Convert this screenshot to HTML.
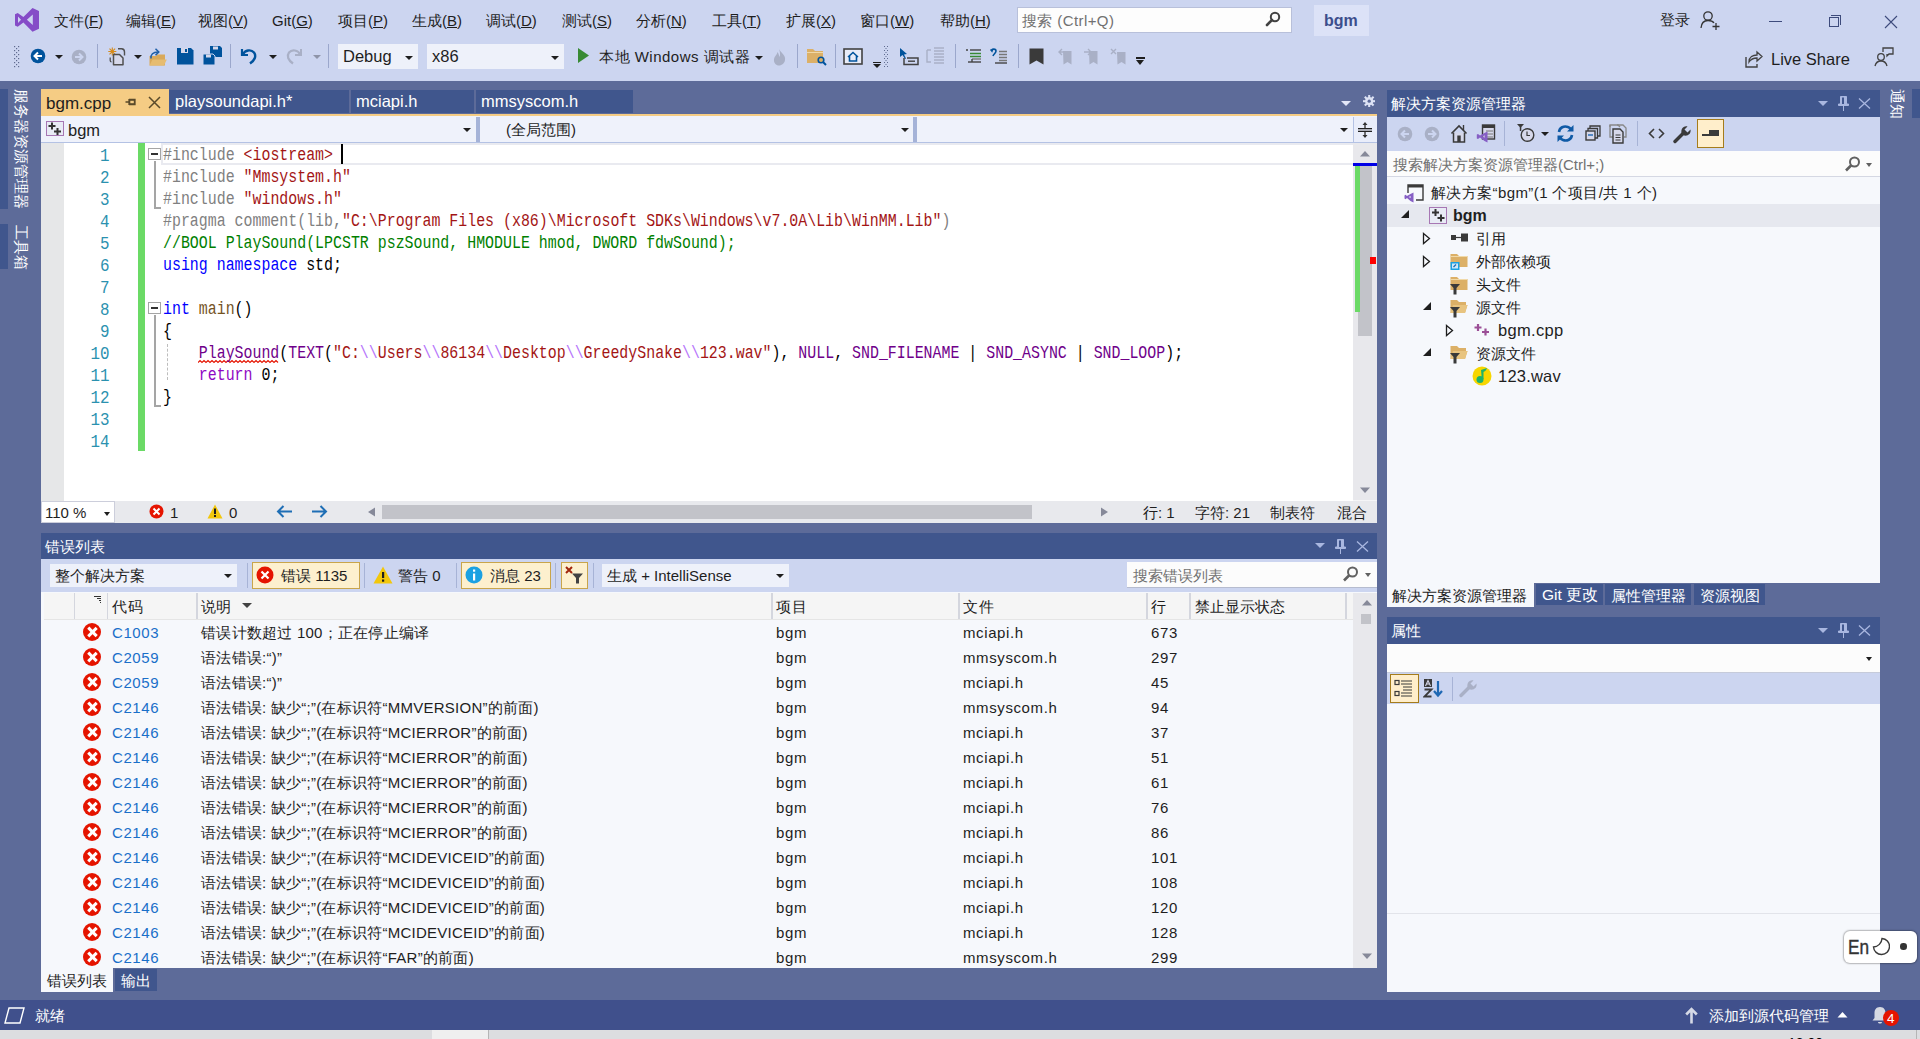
<!DOCTYPE html>
<html><head><meta charset="utf-8">
<style>
*{margin:0;padding:0;box-sizing:border-box}
html,body{width:1920px;height:1039px;overflow:hidden}
body{position:relative;background:#CCD5F0;font-family:"Liberation Sans",sans-serif;font-size:15px;color:#1E1E1E}
.a{position:absolute}
.t{position:absolute;white-space:nowrap;line-height:1}
.env{position:absolute;left:0;top:81px;width:1920px;height:919px;background:#5D6B99}
.menu .t{top:13px;font-size:15px;color:#1E1E1E}
.sep{position:absolute;width:1px;background:#9BA7CC}
.combo{position:absolute;background:#EEF1FA}
.arr{position:absolute;width:0;height:0;border-left:4px solid transparent;border-right:4px solid transparent;border-top:4px solid #1E1E1E}
.dtab{position:absolute;top:90px;height:23px;background:#40568D;color:#fff;font-size:15px}
.code{position:absolute;left:162.5px;font-family:"Liberation Mono",monospace;font-size:18.333px;transform-origin:0 0;transform:scaleX(0.8135);padding-top:2px;white-space:pre;line-height:22px;color:#000}
.ln{position:absolute;left:64px;width:45.5px;text-align:right;transform-origin:100% 0;transform:scaleX(0.88);font-family:"Liberation Mono",monospace;font-size:18px;padding-top:2px;line-height:22px;color:#2B91AF}
.pp{color:#808080}.str{color:#A31515}.cm{color:#008000}.kw{color:#0000FF}.fn{color:#74531F}.mac{color:#6F008A}.esc{color:#B776FB}.ctl{color:#8F08C4}
.twtitle{position:absolute;height:26px;background:#40568D;color:#fff}
.row{position:absolute;left:41px;width:1312px;height:25px}
.row .t{top:5px;font-size:15px}
.ico-err{position:absolute;width:18px;height:18px;border-radius:50%;background:#E51400}
.ico-err:before,.ico-err:after{content:"";position:absolute;left:7.6px;top:3px;width:2.8px;height:12px;background:#fff;transform:rotate(45deg)}
.ico-err:after{transform:rotate(-45deg)}
.tree .t{font-size:15px}
</style></head><body>

<!-- ===== title bar ===== -->
<div class="menu">
<!-- logo -->
<svg class="a" style="left:10px;top:4px" width="34" height="32" viewBox="0 0 34 32"><path d="M22.5 3.9 L29 7 L29 24.7 L22.5 27.7 L13.4 18.6 L7.7 22.7 L5 21.4 L5 10.2 L7.7 8.9 L13.4 13.1 Z M22.8 10.6 L16.9 15.8 L22.8 21.1 Z M8 12.5 L11 15.8 L8 19.1 Z" fill="#854CC7" fill-rule="evenodd"/></svg>
<div class="t" style="left:54px">文件(<u>F</u>)</div>
<div class="t" style="left:126px">编辑(<u>E</u>)</div>
<div class="t" style="left:198px">视图(<u>V</u>)</div>
<div class="t" style="left:272px">Git(<u>G</u>)</div>
<div class="t" style="left:338px">项目(<u>P</u>)</div>
<div class="t" style="left:412px">生成(<u>B</u>)</div>
<div class="t" style="left:486px">调试(<u>D</u>)</div>
<div class="t" style="left:562px">测试(<u>S</u>)</div>
<div class="t" style="left:636px">分析(<u>N</u>)</div>
<div class="t" style="left:712px">工具(<u>T</u>)</div>
<div class="t" style="left:786px">扩展(<u>X</u>)</div>
<div class="t" style="left:860px">窗口(<u>W</u>)</div>
<div class="t" style="left:940px">帮助(<u>H</u>)</div>
<!-- search -->
<div class="a" style="left:1017px;top:7px;width:275px;height:26px;background:#FDFDFD;border:1px solid #B8C0DA"></div>
<div class="t" style="left:1022px;top:13px;color:#717171;letter-spacing:0.4px">搜索 (Ctrl+Q)</div>
<svg class="a" style="left:1265px;top:11px" width="16" height="16" viewBox="0 0 16 16"><circle cx="10" cy="6" r="4.2" fill="none" stroke="#424242" stroke-width="2"/><path d="M7 9 L2 14" stroke="#424242" stroke-width="2.6" stroke-linecap="round"/></svg>
<div class="a" style="left:1314px;top:5px;width:55px;height:31px;background:#DCE2F7"></div>
<div class="t" style="left:1324px;top:13px;font-weight:bold;font-size:16px;color:#3C4E8C">bgm</div>
<div class="t" style="left:1660px;top:12px">登录</div>
<svg class="a" style="left:1700px;top:10px" width="22" height="20" viewBox="0 0 22 20"><circle cx="8" cy="6" r="4.2" fill="none" stroke="#333" stroke-width="1.3"/><path d="M1 18 C1.5 12 4 10.5 8 10.5 C11 10.5 13 11.5 14 13" fill="none" stroke="#333" stroke-width="1.3"/><path d="M16 13 V20 M12.5 16.5 H19.5" stroke="#333" stroke-width="1.3"/></svg>
<div class="a" style="left:1769px;top:21px;width:13px;height:1px;background:#3D4B7C"></div>
<div class="a" style="left:1829px;top:17px;width:10px;height:10px;border:1px solid #3D4B7C"></div>
<div class="a" style="left:1831px;top:15px;width:10px;height:10px;border-top:1px solid #3D4B7C;border-right:1px solid #3D4B7C"></div>
<svg class="a" style="left:1884px;top:15px" width="14" height="14" viewBox="0 0 14 14"><path d="M1 1 L13 13 M13 1 L1 13" stroke="#3D4B7C" stroke-width="1.1"/></svg>
</div>


<!-- ===== toolbar ===== -->
<svg class="a" style="left:13px;top:45px" width="8" height="23" viewBox="0 0 8 23"><g fill="#5F6B8F">
<rect x="1" y="1" width="1.2" height="1.2"/><rect x="5" y="1" width="1.2" height="1.2"/><rect x="3" y="3" width="1.2" height="1.2"/><rect x="1" y="5" width="1.2" height="1.2"/><rect x="5" y="5" width="1.2" height="1.2"/><rect x="3" y="7" width="1.2" height="1.2"/><rect x="1" y="9" width="1.2" height="1.2"/><rect x="5" y="9" width="1.2" height="1.2"/><rect x="3" y="11" width="1.2" height="1.2"/><rect x="1" y="13" width="1.2" height="1.2"/><rect x="5" y="13" width="1.2" height="1.2"/><rect x="3" y="15" width="1.2" height="1.2"/><rect x="1" y="17" width="1.2" height="1.2"/><rect x="5" y="17" width="1.2" height="1.2"/><rect x="3" y="19" width="1.2" height="1.2"/><rect x="1" y="21" width="1.2" height="1.2"/><rect x="5" y="21" width="1.2" height="1.2"/></g></svg>
<svg class="a" style="left:30px;top:48px" width="16" height="16" viewBox="0 0 16 16"><circle cx="8" cy="8" r="7.3" fill="#00539C"/><path d="M12 8 H5 M8 4.5 L4.5 8 L8 11.5" fill="none" stroke="#fff" stroke-width="2"/></svg>
<div class="arr" style="left:55px;top:55px"></div>
<svg class="a" style="left:71px;top:49px" width="16" height="16" viewBox="0 0 16 16"><circle cx="8" cy="8" r="7.3" fill="#A9B0C6"/><path d="M4 8 H11 M8 4.5 L11.5 8 L8 11.5" fill="none" stroke="#CCD5F0" stroke-width="2"/></svg>
<div class="sep" style="left:97px;top:44px;height:24px"></div>
<svg class="a" style="left:107px;top:46px" width="20" height="20" viewBox="0 0 20 20"><path d="M5.3 1.5 V9.5 M1.3 5.5 H9.3 M2.5 2.7 L8.1 8.3 M8.1 2.7 L2.5 8.3" stroke="#D68A1A" stroke-width="1.1"/><path d="M11 2.8 H14.5 Q17.5 3 17.5 6 V9.5" fill="none" stroke="#505050" stroke-width="1.4"/><path d="M3.2 11.5 V14.5 Q3.2 15.8 4.5 15.8" fill="none" stroke="#505050" stroke-width="1.3"/><path d="M6.5 8.5 H12.5 L16 12 V18.8 H6.5 Z" fill="#D6D8EA" stroke="#505050" stroke-width="1.5" stroke-linejoin="round"/></svg>
<div class="arr" style="left:134px;top:55px"></div>
<svg class="a" style="left:148px;top:47px" width="20" height="19" viewBox="0 0 20 19"><path d="M1.5 9 H8 L9 7.5 H17 V18.5 H1.5 Z" fill="#D9A95A"/><path d="M1.5 18.5 L4.5 12.5 H18.8 L16 18.5 Z" fill="#E6BC70"/><path d="M3 11.5 C2.5 7.5 5 5 10 5" fill="none" stroke="#1E5FA8" stroke-width="1.5"/><path d="M7.5 1.8 L10.8 5 L7.5 8.2" fill="none" stroke="#1E5FA8" stroke-width="1.5"/></svg>
<svg class="a" style="left:177px;top:48px" width="17" height="17" viewBox="0 0 17 17"><path d="M0 0 H14 L16.5 2.5 V16.5 H0 Z" fill="#00539C"/><rect x="4" y="0" width="7" height="5" fill="#D6D8EA"/><rect x="8" y="1" width="2" height="3" fill="#00539C"/></svg>
<svg class="a" style="left:202px;top:46px" width="20" height="20" viewBox="0 0 20 20"><path d="M8 0 H18 L20 2 V11 H8 Z" fill="#00539C"/><rect x="11" y="0.5" width="5" height="3" fill="#D6D8EA"/><path d="M1 8 H11 L13 10 V19 H1 Z" fill="#00539C" stroke="#CCD5F0" stroke-width="1"/><rect x="4" y="8.5" width="5" height="3" fill="#D6D8EA"/></svg>
<div class="sep" style="left:230px;top:44px;height:24px"></div>
<svg class="a" style="left:240px;top:47px" width="18" height="18" viewBox="0 0 18 18"><path d="M2 2 V8 H8" fill="none" stroke="#00539C" stroke-width="2.2"/><path d="M2.8 7.5 C5 3 11 2 14 5.5 C16.5 9 15 13 10 16.5" fill="none" stroke="#00539C" stroke-width="2.4"/></svg>
<div class="arr" style="left:269px;top:55px"></div>
<svg class="a" style="left:285px;top:47px" width="18" height="18" viewBox="0 0 18 18"><path d="M16 2 V8 H10" fill="none" stroke="#A9B0C6" stroke-width="2"/><path d="M15.2 7.5 C13 3 7 2 4 5.5 C1.5 9 3 13 8 16.5" fill="none" stroke="#A9B0C6" stroke-width="2.2"/></svg>
<div class="arr" style="left:313px;top:55px;border-top-color:#8E94A8"></div>
<div class="sep" style="left:328px;top:44px;height:24px"></div>
<div class="combo" style="left:338px;top:44px;width:80px;height:25px"></div>
<div class="t" style="left:343px;top:48px;font-size:16.5px">Debug</div>
<div class="arr" style="left:405px;top:56px"></div>
<div class="combo" style="left:427px;top:44px;width:137px;height:25px"></div>
<div class="t" style="left:432px;top:48px;font-size:16.5px">x86</div>
<div class="arr" style="left:551px;top:56px"></div>
<svg class="a" style="left:577px;top:47px" width="13" height="17" viewBox="0 0 13 17"><path d="M1 1 L12 8.5 L1 16 Z" fill="#388A34"/></svg>
<div class="t" style="left:599px;top:49px;letter-spacing:0.5px">本地 Windows 调试器</div>
<div class="arr" style="left:755px;top:56px"></div>
<svg class="a" style="left:772px;top:48px" width="15" height="18" viewBox="0 0 15 18"><path d="M7 1 C9 5 14 7 13 12 C12.5 16 9 17.5 7 17.5 C4 17.5 1.5 15 2 11 C2.5 8 5 7 5.5 4 C7 6 7 8 7.5 9 C8.5 7 8 4 7 1Z" fill="#A9B0C6"/></svg>
<div class="sep" style="left:797px;top:44px;height:24px"></div>
<svg class="a" style="left:806px;top:48px" width="22" height="18" viewBox="0 0 22 18"><path d="M1 1 H7 L9 3 H17 V15 H1 Z" fill="#DCB067"/><rect x="1" y="4" width="16" height="1" fill="#F0D9A8"/><circle cx="15" cy="12" r="2.8" fill="none" stroke="#00539C" stroke-width="1.6"/><path d="M17 14 L20 17" stroke="#00539C" stroke-width="2"/></svg>
<div class="sep" style="left:835px;top:44px;height:24px"></div>
<svg class="a" style="left:843px;top:48px" width="20" height="17" viewBox="0 0 20 17"><rect x="1" y="1" width="18" height="15" fill="#E8ECF8" stroke="#424242" stroke-width="1.6"/><path d="M5 9 L10 4.5 L15 9 M6.5 8 V13 H13.5 V8" fill="none" stroke="#00539C" stroke-width="1.6"/></svg>
<div class="a" style="left:873px;top:62px;width:8px;height:1px;background:#1E1E1E"></div>
<div class="arr" style="left:873px;top:64px"></div>
<svg class="a" style="left:884px;top:45px" width="5" height="23" viewBox="0 0 5 23"><g fill="#5F6B8F"><rect x="0" y="1" width="1" height="1"/><rect x="3" y="1" width="1" height="1"/><rect x="1.5" y="3" width="1" height="1"/><rect x="0" y="5" width="1" height="1"/><rect x="3" y="5" width="1" height="1"/><rect x="1.5" y="7" width="1" height="1"/><rect x="0" y="9" width="1" height="1"/><rect x="3" y="9" width="1" height="1"/><rect x="1.5" y="11" width="1" height="1"/><rect x="0" y="13" width="1" height="1"/><rect x="3" y="13" width="1" height="1"/><rect x="1.5" y="15" width="1" height="1"/><rect x="0" y="17" width="1" height="1"/><rect x="3" y="17" width="1" height="1"/><rect x="1.5" y="19" width="1" height="1"/><rect x="0" y="21" width="1" height="1"/><rect x="3" y="21" width="1" height="1"/></g></svg>
<svg class="a" style="left:899px;top:47px" width="20" height="19" viewBox="0 0 20 19"><path d="M1 1 L1 10 L3.5 8 L6 12 L7 11.5 L5 7.5 L8 7 Z" fill="#00539C"/><path d="M5 11 V17.5 H19 V11 H8" fill="none" stroke="#424242" stroke-width="1.5"/><rect x="9" y="13.5" width="7" height="1.4" fill="#424242"/></svg>
<svg class="a" style="left:926px;top:47px" width="20" height="19" viewBox="0 0 20 19"><g fill="none" stroke="#A9B0C6" stroke-width="1.4"><path d="M1 3 V15 H5 M1 3 H5"/><path d="M8 1 H18 M8 4 H18 M8 7 H18 M8 10 H18 M8 13 H18 M8 16 H18"/></g></svg>
<div class="sep" style="left:955px;top:44px;height:24px"></div>
<svg class="a" style="left:965px;top:49px" width="17" height="14" viewBox="0 0 17 14"><g fill="none" stroke-width="1.4"><path d="M1 1 H3" stroke="#424242"/><path d="M5 1 H16" stroke="#424242"/><path d="M5 4.5 H16 M5 7.5 H16" stroke="#388A34"/><path d="M7 10 H16" stroke="#777"/><path d="M3 13 H16" stroke="#424242"/><path d="M7 10 V13" stroke="#424242"/></g></svg>
<svg class="a" style="left:990px;top:48px" width="18" height="16" viewBox="0 0 18 16"><path d="M1.5 3 C1.5 0.5 6 0.5 6 3 C6 5 3.5 6 3 8" fill="none" stroke="#00539C" stroke-width="1.6"/><path d="M0.5 1.5 L2 3.5 L3 1" fill="none" stroke="#00539C" stroke-width="1.2"/><g stroke="#777" stroke-width="1.4"><path d="M9 3.5 H17 M9 6.5 H17 M9 9.5 H17 M9 12.5 H17"/></g><path d="M5 15 H17" stroke="#424242" stroke-width="1.4"/></svg>
<div class="sep" style="left:1018px;top:44px;height:24px"></div>
<svg class="a" style="left:1029px;top:48px" width="15" height="17" viewBox="0 0 15 17"><path d="M0.5 0.5 H14.5 V16.5 L7.5 12.5 L0.5 16.5 Z" fill="#3A3A3A"/></svg>
<svg class="a" style="left:1057px;top:48px" width="16" height="17" viewBox="0 0 16 17"><path d="M6 3 H14.5 V16.5 L10.5 14 L6.5 16.5 Z" fill="#A9B0C6"/><path d="M9 4 H2 M5 1 L2 4 L5 7" fill="none" stroke="#A9B0C6" stroke-width="1.4"/></svg>
<svg class="a" style="left:1083px;top:48px" width="16" height="17" viewBox="0 0 16 17"><path d="M6 3 H14.5 V16.5 L10.5 14 L6.5 16.5 Z" fill="#A9B0C6"/><path d="M1 4 H8 M5 1 L8 4 L5 7" fill="none" stroke="#A9B0C6" stroke-width="1.4"/></svg>
<svg class="a" style="left:1110px;top:48px" width="17" height="17" viewBox="0 0 17 17"><path d="M7 4 H15.5 V16.5 L11.5 14 L7.5 16.5 Z" fill="#A9B0C6"/><path d="M1 1 L6 6 M6 1 L1 6" fill="none" stroke="#A9B0C6" stroke-width="1.4"/></svg>
<div class="a" style="left:1136px;top:57px;width:9px;height:1.5px;background:#1E1E1E"></div>
<div class="arr" style="left:1136px;top:60px;border-left-width:4.5px;border-right-width:4.5px;border-top-width:5px"></div>
<svg class="a" style="left:1745px;top:49px" width="18" height="19" viewBox="0 0 18 19"><path d="M1 8 V18 H12 V15" fill="none" stroke="#424242" stroke-width="1.4"/><path d="M4 13 C4 8 8 6 12 6 V3 L17 7.5 L12 12 V9 C9 9 6 10 4 13Z" fill="none" stroke="#424242" stroke-width="1.3"/></svg>
<div class="t" style="left:1771px;top:51px;font-size:16.5px">Live Share</div>
<svg class="a" style="left:1874px;top:47px" width="20" height="20" viewBox="0 0 20 20"><circle cx="7" cy="10" r="3.3" fill="none" stroke="#424242" stroke-width="1.3"/><path d="M1 19 C2 15 4 14 7 14 C10 14 12 15 13 19" fill="none" stroke="#424242" stroke-width="1.3"/><path d="M9 5 V1 H19 V7 H15 L13 9 V7" fill="none" stroke="#424242" stroke-width="1.3"/></svg>

<!-- ===== env ===== -->
<div class="env"></div>

<!-- ===== left strip ===== -->
<div class="a" style="left:0;top:89px;width:8px;height:120px;background:#40568D"></div>
<div class="a" style="left:0;top:224px;width:8px;height:45px;background:#40568D"></div>
<div class="t" style="left:29px;top:89px;transform-origin:0 0;transform:rotate(90deg);font-size:15px;color:#fff">服务器资源管理器</div>
<div class="t" style="left:29px;top:225px;transform-origin:0 0;transform:rotate(90deg);font-size:15px;color:#fff">工具箱</div>

<!-- ===== document tabs ===== -->
<div class="a" style="left:41px;top:89px;width:128px;height:27px;background:#F5CC84"></div>
<div class="t" style="left:46px;top:95px;font-size:17px;color:#1E1E1E">bgm.cpp</div>
<svg class="a" style="left:125px;top:96px" width="12" height="12" viewBox="0 0 12 12"><path d="M0.5 6 H4 M4 3 V9 M4 3.5 H10 V8.5 H4" fill="none" stroke="#5A4A2A" stroke-width="1.3"/><rect x="4" y="3.5" width="6" height="5" fill="#5A4A2A"/><rect x="5.3" y="4.8" width="3.5" height="2.4" fill="#F5CC84"/></svg>
<svg class="a" style="left:148px;top:96px" width="13" height="13" viewBox="0 0 13 13"><path d="M1 1 L12 12 M12 1 L1 12" stroke="#5A4A2A" stroke-width="1.5"/></svg>
<div class="a" style="left:169px;top:114px;width:1208px;height:2px;background:#F5CC84"></div>
<div class="dtab" style="left:169px;width:180px"><div class="t" style="left:6px;top:3px;font-size:16.5px">playsoundapi.h*</div></div>
<div class="dtab" style="left:351px;width:123px"><div class="t" style="left:5px;top:3px;font-size:16.5px">mciapi.h</div></div>
<div class="dtab" style="left:476px;width:157px"><div class="t" style="left:5px;top:3px;font-size:16.5px">mmsyscom.h</div></div>
<div class="arr" style="left:1341px;top:101px;border-top-color:#E3E7F8;border-left-width:5px;border-right-width:5px;border-top-width:5px"></div>
<svg class="a" style="left:1362.8px;top:95px" width="12.4" height="12.4" viewBox="0 0 14.4 14.4"><g fill="#DDE2F4"><circle cx="7.2" cy="7.2" r="4.8"/><rect x="6" y="0" width="2.4" height="3.5" transform="rotate(0 7.2 7.2)"/><rect x="6" y="0" width="2.4" height="3.5" transform="rotate(45 7.2 7.2)"/><rect x="6" y="0" width="2.4" height="3.5" transform="rotate(90 7.2 7.2)"/><rect x="6" y="0" width="2.4" height="3.5" transform="rotate(135 7.2 7.2)"/><rect x="6" y="0" width="2.4" height="3.5" transform="rotate(180 7.2 7.2)"/><rect x="6" y="0" width="2.4" height="3.5" transform="rotate(225 7.2 7.2)"/><rect x="6" y="0" width="2.4" height="3.5" transform="rotate(270 7.2 7.2)"/><rect x="6" y="0" width="2.4" height="3.5" transform="rotate(315 7.2 7.2)"/></g><circle cx="7.2" cy="7.2" r="1.9" fill="#5D6B99"/></svg>

<!-- ===== nav bar ===== -->
<div class="a" style="left:41px;top:116px;width:1336px;height:27px;background:#EFF2FB;border-bottom:1px solid #B4C2E4"></div>
<div class="a" style="left:46px;top:121px;width:18px;height:15px;border:1px solid #A777B4;background:#E8EBF5"></div>
<svg class="a" style="left:48px;top:122px" width="14" height="14" viewBox="0 0 14 14"><path d="M4 0.5 V7.5 M0.5 4 H7.5 M9.5 6 V13 M6 9.5 H13" stroke="#333" stroke-width="2"/></svg>
<div class="t" style="left:68px;top:122px;font-size:16.5px">bgm</div>
<div class="arr" style="left:463px;top:128px"></div>
<div class="a" style="left:476px;top:117px;width:4px;height:25px;background:#A5B3D8"></div>
<div class="t" style="left:506px;top:122px;font-size:15px">(全局范围)</div>
<div class="arr" style="left:901px;top:128px"></div>
<div class="a" style="left:913px;top:117px;width:4px;height:25px;background:#A5B3D8"></div>
<div class="arr" style="left:1340px;top:128px"></div>
<div class="a" style="left:1353px;top:117px;width:1px;height:25px;background:#B4C2E4"></div>
<div class="a" style="left:1354px;top:117px;width:23px;height:25px;background:#E9EDFA"></div><svg class="a" style="left:1357px;top:121px" width="16" height="18" viewBox="0 0 16 18"><rect x="1" y="7.5" width="14" height="3" fill="#A9ABB5"/><path d="M1 7.5 H15 M1 10.5 H15" stroke="#222" stroke-width="1.2"/><path d="M8 2 V7 M8 11 V16" stroke="#444" stroke-width="1.5"/><path d="M5.5 4 L8 1 L10.5 4 Z M5.5 14 L8 17 L10.5 14 Z" fill="#333"/></svg>

<!-- ===== editor ===== -->
<div class="a" style="left:41px;top:143px;width:1312px;height:358px;background:#fff"></div>
<div class="a" style="left:41px;top:143px;width:23px;height:358px;background:#E6E7E8"></div>
<div class="a" style="left:138px;top:143px;width:7px;height:308px;background:#6BDA66"></div>
<div class="a" style="left:1353px;top:143px;width:24px;height:358px;background:#E8E8EC"></div>

<div class="a" style="left:161px;top:143px;width:1192px;height:22px;border:2px solid #E9EAF0;border-right:none"></div>
<div class="a" style="left:341px;top:144px;width:2px;height:20px;background:#000"></div>
<div class="a" style="left:148px;top:148px;width:13px;height:12px;border:1px solid #A5A5A5;background:#fff"></div>
<div class="a" style="left:151px;top:153px;width:7px;height:2px;background:#333"></div>
<div class="a" style="left:154px;top:161px;width:1.5px;height:47px;background:#A5A5A5"></div>
<div class="a" style="left:154px;top:207px;width:7px;height:1.5px;background:#A5A5A5"></div>
<div class="a" style="left:148px;top:302px;width:13px;height:12px;border:1px solid #A5A5A5;background:#fff"></div>
<div class="a" style="left:151px;top:307px;width:7px;height:2px;background:#333"></div>
<div class="a" style="left:154px;top:315px;width:1.5px;height:91px;background:#A5A5A5"></div>
<div class="a" style="left:154px;top:405px;width:7px;height:1.5px;background:#A5A5A5"></div>
<div class="a" style="left:167px;top:344px;width:1px;height:36px;border-left:1px dashed #BDBDBD"></div>
<svg class="a" style="left:198px;top:359px" width="81" height="5" viewBox="0 0 81 5"><path d="M0 3.5 L2 1.5 L4 3.5 L6 1.5 L8 3.5 L10 1.5 L12 3.5 L14 1.5 L16 3.5 L18 1.5 L20 3.5 L22 1.5 L24 3.5 L26 1.5 L28 3.5 L30 1.5 L32 3.5 L34 1.5 L36 3.5 L38 1.5 L40 3.5 L42 1.5 L44 3.5 L46 1.5 L48 3.5 L50 1.5 L52 3.5 L54 1.5 L56 3.5 L58 1.5 L60 3.5 L62 1.5 L64 3.5 L66 1.5 L68 3.5 L70 1.5 L72 3.5 L74 1.5 L76 3.5 L78 1.5 L80 3.5" fill="none" stroke="#E51400" stroke-width="1.1"/></svg>
<div class="ln" style="top:143px">1</div>
<div class="code" style="top:143px"><span class="pp">#include</span> <span class="str">&lt;iostream&gt;</span></div>
<div class="ln" style="top:165px">2</div>
<div class="code" style="top:165px"><span class="pp">#include</span> <span class="str">"Mmsystem.h"</span></div>
<div class="ln" style="top:187px">3</div>
<div class="code" style="top:187px"><span class="pp">#include</span> <span class="str">"windows.h"</span></div>
<div class="ln" style="top:209px">4</div>
<div class="code" style="top:209px"><span class="pp">#pragma comment(lib,</span><span class="str">"C:\Program Files (x86)\Microsoft SDKs\Windows\v7.0A\Lib\WinMM.Lib"</span><span class="pp">)</span></div>
<div class="ln" style="top:231px">5</div>
<div class="code" style="top:231px"><span class="cm">//BOOL PlaySound(LPCSTR pszSound, HMODULE hmod, DWORD fdwSound);</span></div>
<div class="ln" style="top:253px">6</div>
<div class="code" style="top:253px"><span class="kw">using</span> <span class="kw">namespace</span> std;</div>
<div class="ln" style="top:275px">7</div>
<div class="code" style="top:275px"></div>
<div class="ln" style="top:297px">8</div>
<div class="code" style="top:297px"><span class="kw">int</span> <span class="fn">main</span>()</div>
<div class="ln" style="top:319px">9</div>
<div class="code" style="top:319px">{</div>
<div class="ln" style="top:341px">10</div>
<div class="code" style="top:341px">    <span class="mac">PlaySound</span>(<span class="mac">TEXT</span>(<span class="str">"C:<span class="esc">\\</span>Users<span class="esc">\\</span>86134<span class="esc">\\</span>Desktop<span class="esc">\\</span>GreedySnake<span class="esc">\\</span>123.wav"</span>), <span class="mac">NULL</span>, <span class="mac">SND_FILENAME</span> | <span class="mac">SND_ASYNC</span> | <span class="mac">SND_LOOP</span>);</div>
<div class="ln" style="top:363px">11</div>
<div class="code" style="top:363px">    <span class="ctl">return</span> 0;</div>
<div class="ln" style="top:385px">12</div>
<div class="code" style="top:385px">}</div>
<div class="ln" style="top:407px">13</div>
<div class="code" style="top:407px"></div>
<div class="ln" style="top:429px">14</div>
<div class="code" style="top:429px"></div>

<!-- ===== editor bottom bar ===== -->
<div class="a" style="left:41px;top:501px;width:1336px;height:22px;background:#E8E9ED"></div>
<div class="a" style="left:41px;top:501px;width:74px;height:22px;background:#fff;border:1px solid #CCCEDB"></div>
<div class="t" style="left:45px;top:505px;font-size:15px">110 %</div>
<div class="arr" style="left:104px;top:512px;border-left-width:3.5px;border-right-width:3.5px"></div>
<svg class="a" style="left:149px;top:504px" width="15" height="15" viewBox="0 0 15 15"><circle cx="7.5" cy="7.5" r="7" fill="#E51400"/><path d="M4.5 4.5 L10.5 10.5 M10.5 4.5 L4.5 10.5" stroke="#fff" stroke-width="2"/></svg>
<div class="t" style="left:170px;top:505px">1</div>
<svg class="a" style="left:207px;top:504px" width="16" height="15" viewBox="0 0 16 15"><path d="M8 0.5 L15.5 14.5 H0.5 Z" fill="#F2C70C"/><rect x="7" y="4.5" width="2" height="5.5" fill="#1E1E1E"/><rect x="7" y="11" width="2" height="2" fill="#1E1E1E"/></svg>
<div class="t" style="left:229px;top:505px">0</div>
<svg class="a" style="left:276px;top:505px" width="17" height="13" viewBox="0 0 17 13"><path d="M16 6.5 H2 M7.5 1 L2 6.5 L7.5 12" fill="none" stroke="#1E6EB5" stroke-width="2"/></svg>
<svg class="a" style="left:311px;top:505px" width="17" height="13" viewBox="0 0 17 13"><path d="M1 6.5 H15 M9.5 1 L15 6.5 L9.5 12" fill="none" stroke="#1E6EB5" stroke-width="2"/></svg>
<svg class="a" style="left:367px;top:507px" width="9" height="10" viewBox="0 0 9 10"><path d="M8 0.5 L1 5 L8 9.5Z" fill="#868999"/></svg>
<div class="a" style="left:382px;top:505px;width:650px;height:14px;background:#C2C3C9"></div>
<svg class="a" style="left:1100px;top:507px" width="9" height="10" viewBox="0 0 9 10"><path d="M1 0.5 L8 5 L1 9.5Z" fill="#868999"/></svg>
<div class="t" style="left:1143px;top:505px">行: 1</div>
<div class="t" style="left:1195px;top:505px">字符: 21</div>
<div class="t" style="left:1270px;top:505px">制表符</div>
<div class="t" style="left:1337px;top:505px">混合</div>

<!-- ===== error list ===== -->
<div class="twtitle" style="left:41px;top:533px;width:1336px"></div>
<div class="t" style="left:45px;top:539px;color:#fff">错误列表</div>
<div class="arr" style="left:1315px;top:543px;border-top-color:#A9B7E0;border-left-width:5px;border-right-width:5px;border-top-width:5px"></div>
<svg class="a" style="left:1335px;top:539px" width="11" height="15" viewBox="0 0 11 15"><path d="M2.5 0.5 H8.5 V8 H10.5 V9.5 H0.5 V8 H2.5 Z M5.5 9.5 V15" fill="#A9B7E0" stroke="#A9B7E0" stroke-width="1"/><rect x="4" y="1.5" width="2" height="6.5" fill="#40568D"/></svg>
<svg class="a" style="left:1356px;top:541px" width="13" height="11" viewBox="0 0 13 11"><path d="M1 0.5 L12 10.5 M12 0.5 L1 10.5" stroke="#A9B7E0" stroke-width="1.3"/></svg>
<div class="a" style="left:41px;top:559px;width:1336px;height:33px;background:#CCD5F0"></div>
<div class="combo" style="left:50px;top:564px;width:187px;height:23px"></div>
<div class="t" style="left:55px;top:568px">整个解决方案</div>
<div class="arr" style="left:224px;top:574px"></div>
<div class="sep" style="left:247px;top:563px;height:25px;background:#A7B3D6"></div>
<div class="a" style="left:252px;top:562px;width:108px;height:27px;background:#FDF0CE;border:1px solid #C9A54B"></div>
<svg class="a" style="left:256px;top:566px" width="18" height="18" viewBox="0 0 18 18"><circle cx="9" cy="9" r="8.5" fill="#E51400"/><path d="M5.5 5.5 L12.5 12.5 M12.5 5.5 L5.5 12.5" stroke="#fff" stroke-width="2.2"/></svg>
<div class="t" style="left:281px;top:568px">错误 1135</div>
<div class="sep" style="left:364px;top:563px;height:25px;background:#A7B3D6"></div>
<svg class="a" style="left:373px;top:566px" width="20" height="18" viewBox="0 0 20 18"><path d="M10 0.5 L19.5 17.5 H0.5 Z" fill="#F2C70C"/><rect x="9" y="6" width="2.2" height="6" fill="#1E1E1E"/><rect x="9" y="13.5" width="2.2" height="2.2" fill="#1E1E1E"/></svg>
<div class="t" style="left:398px;top:568px">警告 0</div>
<div class="sep" style="left:456px;top:563px;height:25px;background:#A7B3D6"></div>
<div class="a" style="left:461px;top:562px;width:90px;height:27px;background:#FDF0CE;border:1px solid #C9A54B"></div>
<svg class="a" style="left:465px;top:566px" width="18" height="18" viewBox="0 0 18 18"><circle cx="9" cy="9" r="8.5" fill="#1BA1E2"/><rect x="8" y="7.5" width="2.2" height="7" fill="#fff"/><rect x="8" y="3.5" width="2.2" height="2.2" fill="#fff"/></svg>
<div class="t" style="left:490px;top:568px">消息 23</div>
<div class="sep" style="left:555px;top:563px;height:25px;background:#A7B3D6"></div>
<div class="a" style="left:561px;top:562px;width:27px;height:27px;background:#FDF0CE;border:1px solid #C9A54B"></div>
<svg class="a" style="left:565px;top:566px" width="19" height="18" viewBox="0 0 19 18"><path d="M1 1 L7 7 M7 1 L1 7" stroke="#A1260D" stroke-width="2"/><path d="M7 7.5 H18 L14 12 V17.5 H11 V12 Z" fill="#424242"/></svg>
<div class="sep" style="left:593px;top:563px;height:25px;background:#A7B3D6"></div>
<div class="combo" style="left:602px;top:564px;width:187px;height:23px"></div>
<div class="t" style="left:607px;top:568px">生成 + IntelliSense</div>
<div class="arr" style="left:776px;top:574px"></div>
<div class="a" style="left:1127px;top:562px;width:250px;height:26px;background:#FCFCFC;border-bottom:1px solid #B6BCCF"></div>
<div class="t" style="left:1133px;top:568px;color:#717171">搜索错误列表</div>
<svg class="a" style="left:1342px;top:566px" width="17" height="17" viewBox="0 0 17 17"><circle cx="10.5" cy="6" r="4.5" fill="none" stroke="#616161" stroke-width="2"/><path d="M7.5 9 L2 14.5" stroke="#616161" stroke-width="2.6"/></svg>
<div class="arr" style="left:1365px;top:573px;border-top-color:#616161;border-left-width:3.5px;border-right-width:3.5px"></div>

<!-- header -->
<div class="a" style="left:41px;top:592px;width:1336px;height:376px;background:#F6F8FC"></div>
<div class="a" style="left:44px;top:593px;width:1309px;height:27px;background:#F5F5F5;border-bottom:1px solid #E5E5E5"></div>
<div class="a" style="left:74px;top:593px;width:1px;height:26px;background:#D4D6DE"></div>
<div class="a" style="left:107px;top:593px;width:1px;height:26px;background:#D4D6DE"></div>
<div class="a" style="left:196px;top:593px;width:2px;height:26px;background:#D4D6DE"></div>
<div class="a" style="left:771px;top:593px;width:2px;height:26px;background:#D4D6DE"></div>
<div class="a" style="left:958px;top:593px;width:2px;height:26px;background:#D4D6DE"></div>
<div class="a" style="left:1146px;top:593px;width:2px;height:26px;background:#D4D6DE"></div>
<div class="a" style="left:1189px;top:593px;width:2px;height:26px;background:#D4D6DE"></div>
<div class="a" style="left:1345px;top:593px;width:2px;height:26px;background:#D4D6DE"></div>
<svg class="a" style="left:94px;top:596px" width="8" height="8" viewBox="0 0 8 8"><path d="M0 0.5 H7 M3 2.5 H7 M5 4.5 H7 M6 6.5 H7" stroke="#333" stroke-width="1.2"/></svg>
<div class="t" style="left:112px;top:599px;letter-spacing:0.6px">代码</div>
<div class="t" style="left:201px;top:599px;letter-spacing:0.25px">说明</div>
<div class="arr" style="left:242px;top:603px;border-top-color:#424242;border-left-width:5px;border-right-width:5px;border-top-width:5px"></div>
<div class="t" style="left:776px;top:599px;letter-spacing:0.6px">项目</div>
<div class="t" style="left:963px;top:599px;letter-spacing:0.6px">文件</div>
<div class="t" style="left:1151px;top:599px;letter-spacing:0.6px">行</div>
<div class="t" style="left:1195px;top:599px">禁止显示状态</div>
<!-- vscroll -->
<div class="a" style="left:1353px;top:593px;width:24px;height:375px;background:#E8E8EC"></div>
<svg class="a" style="left:1361px;top:599px" width="12" height="7" viewBox="0 0 12 7"><path d="M1 6.5 L6 1 L11 6.5Z" fill="#868999"/></svg>
<div class="a" style="left:1361px;top:614px;width:10px;height:10px;background:#C2C3C9"></div>
<svg class="a" style="left:1361px;top:953px" width="12" height="7" viewBox="0 0 12 7"><path d="M1 0.5 L6 6 L11 0.5Z" fill="#868999"/></svg>
<div class="ico-err" style="left:83px;top:623px"></div><div class="t" style="left:112px;top:625px;color:#1A6FC9;letter-spacing:0.6px">C1003</div><div class="t" style="left:201px;top:625px;letter-spacing:0.25px">错误计数超过 100；正在停止编译</div><div class="t" style="left:776px;top:625px;letter-spacing:0.6px">bgm</div><div class="t" style="left:963px;top:625px;letter-spacing:0.6px">mciapi.h</div><div class="t" style="left:1151px;top:625px;letter-spacing:0.6px">673</div>
<div class="ico-err" style="left:83px;top:648px"></div><div class="t" style="left:112px;top:650px;color:#1A6FC9;letter-spacing:0.6px">C2059</div><div class="t" style="left:201px;top:650px;letter-spacing:0.25px">语法错误:“)”</div><div class="t" style="left:776px;top:650px;letter-spacing:0.6px">bgm</div><div class="t" style="left:963px;top:650px;letter-spacing:0.6px">mmsyscom.h</div><div class="t" style="left:1151px;top:650px;letter-spacing:0.6px">297</div>
<div class="ico-err" style="left:83px;top:673px"></div><div class="t" style="left:112px;top:675px;color:#1A6FC9;letter-spacing:0.6px">C2059</div><div class="t" style="left:201px;top:675px;letter-spacing:0.25px">语法错误:“)”</div><div class="t" style="left:776px;top:675px;letter-spacing:0.6px">bgm</div><div class="t" style="left:963px;top:675px;letter-spacing:0.6px">mciapi.h</div><div class="t" style="left:1151px;top:675px;letter-spacing:0.6px">45</div>
<div class="ico-err" style="left:83px;top:698px"></div><div class="t" style="left:112px;top:700px;color:#1A6FC9;letter-spacing:0.6px">C2146</div><div class="t" style="left:201px;top:700px;letter-spacing:0.25px">语法错误: 缺少“;”(在标识符“MMVERSION”的前面)</div><div class="t" style="left:776px;top:700px;letter-spacing:0.6px">bgm</div><div class="t" style="left:963px;top:700px;letter-spacing:0.6px">mmsyscom.h</div><div class="t" style="left:1151px;top:700px;letter-spacing:0.6px">94</div>
<div class="ico-err" style="left:83px;top:723px"></div><div class="t" style="left:112px;top:725px;color:#1A6FC9;letter-spacing:0.6px">C2146</div><div class="t" style="left:201px;top:725px;letter-spacing:0.25px">语法错误: 缺少“;”(在标识符“MCIERROR”的前面)</div><div class="t" style="left:776px;top:725px;letter-spacing:0.6px">bgm</div><div class="t" style="left:963px;top:725px;letter-spacing:0.6px">mciapi.h</div><div class="t" style="left:1151px;top:725px;letter-spacing:0.6px">37</div>
<div class="ico-err" style="left:83px;top:748px"></div><div class="t" style="left:112px;top:750px;color:#1A6FC9;letter-spacing:0.6px">C2146</div><div class="t" style="left:201px;top:750px;letter-spacing:0.25px">语法错误: 缺少“;”(在标识符“MCIERROR”的前面)</div><div class="t" style="left:776px;top:750px;letter-spacing:0.6px">bgm</div><div class="t" style="left:963px;top:750px;letter-spacing:0.6px">mciapi.h</div><div class="t" style="left:1151px;top:750px;letter-spacing:0.6px">51</div>
<div class="ico-err" style="left:83px;top:773px"></div><div class="t" style="left:112px;top:775px;color:#1A6FC9;letter-spacing:0.6px">C2146</div><div class="t" style="left:201px;top:775px;letter-spacing:0.25px">语法错误: 缺少“;”(在标识符“MCIERROR”的前面)</div><div class="t" style="left:776px;top:775px;letter-spacing:0.6px">bgm</div><div class="t" style="left:963px;top:775px;letter-spacing:0.6px">mciapi.h</div><div class="t" style="left:1151px;top:775px;letter-spacing:0.6px">61</div>
<div class="ico-err" style="left:83px;top:798px"></div><div class="t" style="left:112px;top:800px;color:#1A6FC9;letter-spacing:0.6px">C2146</div><div class="t" style="left:201px;top:800px;letter-spacing:0.25px">语法错误: 缺少“;”(在标识符“MCIERROR”的前面)</div><div class="t" style="left:776px;top:800px;letter-spacing:0.6px">bgm</div><div class="t" style="left:963px;top:800px;letter-spacing:0.6px">mciapi.h</div><div class="t" style="left:1151px;top:800px;letter-spacing:0.6px">76</div>
<div class="ico-err" style="left:83px;top:823px"></div><div class="t" style="left:112px;top:825px;color:#1A6FC9;letter-spacing:0.6px">C2146</div><div class="t" style="left:201px;top:825px;letter-spacing:0.25px">语法错误: 缺少“;”(在标识符“MCIERROR”的前面)</div><div class="t" style="left:776px;top:825px;letter-spacing:0.6px">bgm</div><div class="t" style="left:963px;top:825px;letter-spacing:0.6px">mciapi.h</div><div class="t" style="left:1151px;top:825px;letter-spacing:0.6px">86</div>
<div class="ico-err" style="left:83px;top:848px"></div><div class="t" style="left:112px;top:850px;color:#1A6FC9;letter-spacing:0.6px">C2146</div><div class="t" style="left:201px;top:850px;letter-spacing:0.25px">语法错误: 缺少“;”(在标识符“MCIDEVICEID”的前面)</div><div class="t" style="left:776px;top:850px;letter-spacing:0.6px">bgm</div><div class="t" style="left:963px;top:850px;letter-spacing:0.6px">mciapi.h</div><div class="t" style="left:1151px;top:850px;letter-spacing:0.6px">101</div>
<div class="ico-err" style="left:83px;top:873px"></div><div class="t" style="left:112px;top:875px;color:#1A6FC9;letter-spacing:0.6px">C2146</div><div class="t" style="left:201px;top:875px;letter-spacing:0.25px">语法错误: 缺少“;”(在标识符“MCIDEVICEID”的前面)</div><div class="t" style="left:776px;top:875px;letter-spacing:0.6px">bgm</div><div class="t" style="left:963px;top:875px;letter-spacing:0.6px">mciapi.h</div><div class="t" style="left:1151px;top:875px;letter-spacing:0.6px">108</div>
<div class="ico-err" style="left:83px;top:898px"></div><div class="t" style="left:112px;top:900px;color:#1A6FC9;letter-spacing:0.6px">C2146</div><div class="t" style="left:201px;top:900px;letter-spacing:0.25px">语法错误: 缺少“;”(在标识符“MCIDEVICEID”的前面)</div><div class="t" style="left:776px;top:900px;letter-spacing:0.6px">bgm</div><div class="t" style="left:963px;top:900px;letter-spacing:0.6px">mciapi.h</div><div class="t" style="left:1151px;top:900px;letter-spacing:0.6px">120</div>
<div class="ico-err" style="left:83px;top:923px"></div><div class="t" style="left:112px;top:925px;color:#1A6FC9;letter-spacing:0.6px">C2146</div><div class="t" style="left:201px;top:925px;letter-spacing:0.25px">语法错误: 缺少“;”(在标识符“MCIDEVICEID”的前面)</div><div class="t" style="left:776px;top:925px;letter-spacing:0.6px">bgm</div><div class="t" style="left:963px;top:925px;letter-spacing:0.6px">mciapi.h</div><div class="t" style="left:1151px;top:925px;letter-spacing:0.6px">128</div>
<div class="ico-err" style="left:83px;top:948px"></div><div class="t" style="left:112px;top:950px;color:#1A6FC9;letter-spacing:0.6px">C2146</div><div class="t" style="left:201px;top:950px;letter-spacing:0.25px">语法错误: 缺少“;”(在标识符“FAR”的前面)</div><div class="t" style="left:776px;top:950px;letter-spacing:0.6px">bgm</div><div class="t" style="left:963px;top:950px;letter-spacing:0.6px">mmsyscom.h</div><div class="t" style="left:1151px;top:950px;letter-spacing:0.6px">299</div>
<!-- bottom tabs -->
<div class="a" style="left:41px;top:968px;width:72px;height:24px;background:#F6F8FC"></div>
<div class="t" style="left:47px;top:973px">错误列表</div>
<div class="a" style="left:115px;top:969px;width:42px;height:22px;background:#40568D"></div>
<div class="t" style="left:121px;top:973px;color:#fff">输出</div>

<!-- editor vscroll -->
<svg class="a" style="left:1359px;top:150px" width="12" height="7" viewBox="0 0 12 7"><path d="M1 6.5 L6 1 L11 6.5Z" fill="#868999"/></svg>
<div class="a" style="left:1353px;top:163px;width:24px;height:3px;background:#0000E6"></div>
<div class="a" style="left:1358px;top:166px;width:14px;height:170px;background:#C2C3C9"></div>
<div class="a" style="left:1355px;top:166px;width:5px;height:146px;background:#6BDA66"></div>
<div class="a" style="left:1370px;top:257px;width:6px;height:7px;background:#FF0000"></div>
<div class="a" style="left:1353px;top:500px;width:24px;height:1px;background:#F5F5F7"></div>
<svg class="a" style="left:1359px;top:487px" width="12" height="7" viewBox="0 0 12 7"><path d="M1 0.5 L6 6 L11 0.5Z" fill="#868999"/></svg>




<!-- ===== solution explorer ===== -->
<div class="twtitle" style="left:1387px;top:90px;width:493px;height:27px"></div>
<div class="t" style="left:1391px;top:96px;color:#fff">解决方案资源管理器</div>
<div class="arr" style="left:1818px;top:101px;border-top-color:#A9B7E0;border-left-width:5px;border-right-width:5px;border-top-width:5px"></div>
<svg class="a" style="left:1838px;top:96px" width="11" height="15" viewBox="0 0 11 15"><path d="M2.5 0.5 H8.5 V8 H10.5 V9.5 H0.5 V8 H2.5 Z M5.5 9.5 V15" fill="#A9B7E0" stroke="#A9B7E0" stroke-width="1"/><rect x="4" y="1.5" width="2" height="6.5" fill="#40568D"/></svg>
<svg class="a" style="left:1858px;top:98px" width="13" height="11" viewBox="0 0 13 11"><path d="M1 0.5 L12 10.5 M12 0.5 L1 10.5" stroke="#A9B7E0" stroke-width="1.3"/></svg>
<div class="a" style="left:1387px;top:117px;width:493px;height:34px;background:#CCD5F0"></div>
<svg class="a" style="left:1397px;top:126px" width="16" height="16" viewBox="0 0 16 16"><circle cx="8" cy="8" r="7.3" fill="#A9B0C6"/><path d="M12 8 H5 M8 4.5 L4.5 8 L8 11.5" fill="none" stroke="#CCD5F0" stroke-width="2"/></svg>
<svg class="a" style="left:1424px;top:126px" width="16" height="16" viewBox="0 0 16 16"><circle cx="8" cy="8" r="7.3" fill="#A9B0C6"/><path d="M4 8 H11 M8 4.5 L11.5 8 L8 11.5" fill="none" stroke="#CCD5F0" stroke-width="2"/></svg>
<svg class="a" style="left:1450px;top:124px" width="18" height="19" viewBox="0 0 18 19"><path d="M1.5 9.5 L9 2 L16.5 9.5" fill="none" stroke="#3A3A3A" stroke-width="1.6"/><path d="M3.5 8.5 V18 H14.5 V8.5" fill="#D6D8EA" stroke="#3A3A3A" stroke-width="1.5"/><rect x="7.3" y="11.5" width="3.4" height="6.5" fill="#3A3A3A"/><path d="M13.5 1 V6" stroke="#3A3A3A" stroke-width="1.4"/></svg>
<svg class="a" style="left:1476px;top:124px" width="20" height="20" viewBox="0 0 20 20"><rect x="6.5" y="1" width="12" height="14" fill="#D6D8EA" stroke="#3A3A3A" stroke-width="1.4"/><rect x="6.5" y="1" width="12" height="3" fill="#3A3A3A"/><path d="M10 7 H17 M10 10 H17 M10 13 H17" stroke="#777" stroke-width="1.2"/><path d="M8.5 9 L11.5 7.5 V18.5 L8.5 17 L4 13.5 L2 15 L0.8 14.4 V10.6 L2 10 L4 11.5Z M8.6 11.3 L6.5 12.5 L8.6 13.7Z" fill="#865FC5" fill-rule="evenodd"/></svg>
<div class="sep" style="left:1504px;top:121px;height:25px;background:#A7B3D6"></div>
<svg class="a" style="left:1516px;top:123px" width="19" height="20" viewBox="0 0 19 20"><path d="M1 1 H8 L4.5 5 Z" fill="#3A3A3A"/><rect x="3.8" y="4" width="1.5" height="4" fill="#3A3A3A"/><circle cx="11.5" cy="12" r="6.3" fill="#D6D8EA" stroke="#3A3A3A" stroke-width="1.4"/><path d="M11 8.5 V12.5 H14" fill="none" stroke="#3A3A3A" stroke-width="1.2"/></svg>
<div class="arr" style="left:1541px;top:132px"></div>
<svg class="a" style="left:1556px;top:124px" width="19" height="19" viewBox="0 0 19 19"><path d="M3 8 C3.5 3.5 8 1.5 12 3 C13.5 3.5 14.5 4.5 15 5.5" fill="none" stroke="#0F5AA6" stroke-width="2.6"/><path d="M17.5 1 V7.5 H11 Z" fill="#0F5AA6"/><path d="M16 11 C15.5 15.5 11 17.5 7 16 C5.5 15.5 4.5 14.5 4 13.5" fill="none" stroke="#0F5AA6" stroke-width="2.6"/><path d="M1.5 18 V11.5 H8 Z" fill="#0F5AA6"/></svg>
<svg class="a" style="left:1585px;top:125px" width="16" height="16" viewBox="0 0 16 16"><path d="M5 3.5 V1 H15 V11 H12.5" fill="none" stroke="#3A3A3A" stroke-width="1.3"/><path d="M3 6 V3.5 H12.5 V13 H10" fill="none" stroke="#3A3A3A" stroke-width="1.3"/><rect x="1" y="6" width="9" height="9" fill="#D6D8EA" stroke="#3A3A3A" stroke-width="1.4"/><path d="M3 10 H8" stroke="#1E68B4" stroke-width="1.4"/></svg>
<svg class="a" style="left:1609px;top:124px" width="20" height="20" viewBox="0 0 20 20"><path d="M1 3 V1 H9 L11 3" fill="none" stroke="#888" stroke-width="1.3"/><path d="M1 1 V13 H4 M8 1 H14 L17 4 V13 H15" fill="none" stroke="#888" stroke-width="1.3"/><path d="M4 5 H11 L14 8 V19 H4 Z" fill="#D6D8EA" stroke="#3A3A3A" stroke-width="1.4"/><path d="M6.5 11 H11.5 M6.5 13.5 H11.5 M6.5 16 H11.5" stroke="#3A3A3A" stroke-width="1.1"/></svg>
<div class="sep" style="left:1637px;top:121px;height:25px;background:#A7B3D6"></div>
<svg class="a" style="left:1648px;top:128px" width="17" height="11" viewBox="0 0 17 11"><path d="M6 1 L1.5 5.5 L6 10 M11 1 L15.5 5.5 L11 10" fill="none" stroke="#3A3A3A" stroke-width="1.6"/></svg>
<svg class="a" style="left:1673px;top:124px" width="20" height="20" viewBox="0 0 20 20"><path d="M2 17.5 L10 9.5" stroke="#3A3A3A" stroke-width="3.4" stroke-linecap="round"/><path d="M9 10 C7 6 10 1.5 14.5 2.5 L11.5 5.5 L14.5 8.5 L17.5 5.5 C18.5 10 14 13 10 11Z" fill="#3A3A3A"/></svg>
<div class="a" style="left:1697px;top:119px;width:27px;height:29px;background:#FFEECB;border:1px solid #A57C1B"></div>
<div class="a" style="left:1702px;top:134px;width:17px;height:2px;background:#3A3A3A"></div>
<div class="a" style="left:1709px;top:130px;width:10px;height:5px;background:#3A3A3A"></div>
<div class="a" style="left:1387px;top:151px;width:493px;height:26px;background:#FCFCFC;border-bottom:1px solid #D5D8E3"></div>
<div class="t" style="left:1393px;top:157px;color:#717171">搜索解决方案资源管理器(Ctrl+;)</div>
<svg class="a" style="left:1844px;top:156px" width="17" height="17" viewBox="0 0 17 17"><circle cx="10.5" cy="6" r="4.5" fill="none" stroke="#616161" stroke-width="2"/><path d="M7.5 9 L2 14.5" stroke="#616161" stroke-width="2.6"/></svg>
<div class="arr" style="left:1866px;top:163px;border-top-color:#616161;border-left-width:3.5px;border-right-width:3.5px"></div>
<!-- tree -->
<div class="a tree" style="left:1387px;top:177px;width:493px;height:406px;background:#F6F8FC"></div>
<div class="a" style="left:1387px;top:204px;width:493px;height:23px;background:#E6E8EF"></div>
<svg class="a" style="left:1404px;top:184px" width="20" height="19" viewBox="0 0 20 19"><path d="M4 9 V1 H19 V16 H12" fill="none" stroke="#3A3A3A" stroke-width="1.4"/><rect x="4" y="1" width="15" height="2.5" fill="#3A3A3A"/><path d="M6.5 10 L9.5 8.5 V18.5 L6.5 17 L3 14 L1.5 15.2 L0.5 14.6 V11.4 L1.5 10.8 L3 12Z M6.6 12 L4.8 13 L6.6 14Z" fill="#865FC5" fill-rule="evenodd"/></svg>
<div class="t" style="left:1431px;top:185px;letter-spacing:0.4px">解决方案“bgm”(1 个项目/共 1 个)</div>
<svg class="a" style="left:1400px;top:209px" width="10" height="10" viewBox="0 0 10 10"><path d="M9 1 V9 H1 Z" fill="#1E1E1E"/></svg>
<div class="a" style="left:1429px;top:207px;width:18px;height:17px;border:1.5px solid #A777B4;background:#E8EBF5"></div>
<svg class="a" style="left:1431px;top:208px" width="15" height="15" viewBox="0 0 15 15"><path d="M4.5 1 V8 M1 4.5 H8 M10 6.5 V13.5 M6.5 10 H13.5" stroke="#333" stroke-width="2"/></svg>
<div class="t" style="left:1453px;top:208px;font-weight:bold;font-size:16px">bgm</div>
<svg class="a" style="left:1422px;top:232px" width="9" height="13" viewBox="0 0 9 13"><path d="M1.5 1.5 L7.5 6.5 L1.5 11.5 Z" fill="none" stroke="#1E1E1E" stroke-width="1.3"/></svg>
<svg class="a" style="left:1450px;top:232px" width="19" height="12" viewBox="0 0 19 12"><rect x="1" y="3" width="5" height="5" fill="#3A3A3A"/><rect x="11" y="1.5" width="7" height="8" fill="#3A3A3A"/><path d="M6 5.5 H11" stroke="#3A3A3A" stroke-width="1.2"/></svg>
<div class="t" style="left:1476px;top:231px">引用</div>
<svg class="a" style="left:1422px;top:255px" width="9" height="13" viewBox="0 0 9 13"><path d="M1.5 1.5 L7.5 6.5 L1.5 11.5 Z" fill="none" stroke="#1E1E1E" stroke-width="1.3"/></svg>
<svg class="a" style="left:1450px;top:253px" width="18" height="17" viewBox="0 0 18 17"><path d="M0.5 1 H7 L9 3 H17.5 V14 H0.5 Z" fill="#DCB067"/><rect x="0.5" y="3" width="17" height="1" fill="#F0D9A8"/><rect x="0.5" y="9" width="9" height="8" fill="#1BA1E2"/><rect x="2" y="10.5" width="6" height="5" fill="#CFE9F8"/><path d="M3.5 14 L6 11.5" stroke="#1E68B4" stroke-width="1.2"/></svg>
<div class="t" style="left:1476px;top:254px">外部依赖项</div>
<svg class="a" style="left:1450px;top:276px" width="18" height="19" viewBox="0 0 18 19"><path d="M0.5 1 H7 L9 3 H17.5 V14 H0.5 Z" fill="#DCB067"/><rect x="0.5" y="3" width="17" height="1" fill="#F0D9A8"/><path d="M0 8 H10 L6.5 12 V18.5 H3.5 V12 Z" fill="#3A3A3A"/></svg>
<div class="t" style="left:1476px;top:277px">头文件</div>
<svg class="a" style="left:1422px;top:301px" width="10" height="10" viewBox="0 0 10 10"><path d="M9 1 V9 H1 Z" fill="#1E1E1E"/></svg>
<svg class="a" style="left:1450px;top:299px" width="18" height="19" viewBox="0 0 18 19"><path d="M0.5 1 H7 L9 3 H16 V6 H17.5 L15 14 H0.5 Z" fill="#DCB067"/><path d="M3 6 H17.5 L15 14 H0.5 Z" fill="#E8C480"/><path d="M0 8 H10 L6.5 12 V18.5 H3.5 V12 Z" fill="#3A3A3A"/></svg>
<div class="t" style="left:1476px;top:300px">源文件</div>
<svg class="a" style="left:1445px;top:324px" width="9" height="13" viewBox="0 0 9 13"><path d="M1.5 1.5 L7.5 6.5 L1.5 11.5 Z" fill="none" stroke="#1E1E1E" stroke-width="1.3"/></svg>
<svg class="a" style="left:1474px;top:323px" width="17" height="14" viewBox="0 0 17 14"><path d="M4 1 V8 M0.5 4.5 H7.5 M11.5 5.5 V12.5 M8 9 H15" stroke="#9B4F96" stroke-width="2.2"/></svg>
<div class="t" style="left:1498px;top:322px;font-size:16.5px;letter-spacing:0.3px">bgm.cpp</div>
<svg class="a" style="left:1422px;top:347px" width="10" height="10" viewBox="0 0 10 10"><path d="M9 1 V9 H1 Z" fill="#1E1E1E"/></svg>
<svg class="a" style="left:1450px;top:345px" width="18" height="19" viewBox="0 0 18 19"><path d="M0.5 1 H7 L9 3 H16 V6 H17.5 L15 14 H0.5 Z" fill="#DCB067"/><path d="M3 6 H17.5 L15 14 H0.5 Z" fill="#E8C480"/><path d="M0 8 H10 L6.5 12 V18.5 H3.5 V12 Z" fill="#3A3A3A"/></svg>
<div class="t" style="left:1476px;top:346px">资源文件</div>
<svg class="a" style="left:1472px;top:366px" width="20" height="20" viewBox="0 0 20 20"><circle cx="10" cy="10" r="9.5" fill="#F7D600"/><path d="M9 4 L15 2 C14 5 12 6 10.5 6 V12" fill="#1DB36B"/><circle cx="8" cy="13.5" r="3.5" fill="#1DB36B"/><rect x="9.5" y="4" width="2" height="9" fill="#1DB36B"/></svg>
<div class="t" style="left:1498px;top:368px;font-size:16.5px;letter-spacing:0.2px">123.wav</div>
<!-- bottom tabs -->
<div class="a" style="left:1387px;top:583px;width:147px;height:24px;background:#F6F8FC"></div>
<div class="t" style="left:1392px;top:588px">解决方案资源管理器</div>
<div class="a" style="left:1536px;top:584px;width:67px;height:21px;background:#40568D"></div>
<div class="t" style="left:1542px;top:587px;color:#fff;font-size:15.5px">Git 更改</div>
<div class="a" style="left:1605px;top:584px;width:86px;height:21px;background:#40568D"></div>
<div class="t" style="left:1611px;top:588px;color:#fff">属性管理器</div>
<div class="a" style="left:1694px;top:584px;width:71px;height:21px;background:#40568D"></div>
<div class="t" style="left:1700px;top:588px;color:#fff">资源视图</div>

<!-- ===== properties ===== -->
<div class="twtitle" style="left:1387px;top:617px;width:493px;height:27px"></div>
<div class="t" style="left:1391px;top:623px;color:#fff">属性</div>
<div class="arr" style="left:1818px;top:628px;border-top-color:#A9B7E0;border-left-width:5px;border-right-width:5px;border-top-width:5px"></div>
<svg class="a" style="left:1838px;top:623px" width="11" height="15" viewBox="0 0 11 15"><path d="M2.5 0.5 H8.5 V8 H10.5 V9.5 H0.5 V8 H2.5 Z M5.5 9.5 V15" fill="#A9B7E0" stroke="#A9B7E0" stroke-width="1"/><rect x="4" y="1.5" width="2" height="6.5" fill="#40568D"/></svg>
<svg class="a" style="left:1858px;top:625px" width="13" height="11" viewBox="0 0 13 11"><path d="M1 0.5 L12 10.5 M12 0.5 L1 10.5" stroke="#A9B7E0" stroke-width="1.3"/></svg>
<div class="a" style="left:1387px;top:644px;width:493px;height:29px;background:#FCFCFC;border-bottom:1px solid #C6CBDA"></div>
<div class="arr" style="left:1866px;top:657px;border-left-width:3.5px;border-right-width:3.5px"></div>
<div class="a" style="left:1387px;top:673px;width:493px;height:31px;background:#CCD5F0"></div>
<div class="a" style="left:1390px;top:674px;width:29px;height:29px;background:#FFEECB;border:1px solid #A57C1B"></div>
<svg class="a" style="left:1394px;top:679px" width="20" height="19" viewBox="0 0 20 19"><rect x="1" y="1.5" width="4" height="4" fill="none" stroke="#3A3A3A" stroke-width="1.2"/><rect x="1" y="12.5" width="4" height="4" fill="none" stroke="#3A3A3A" stroke-width="1.2"/><path d="M7 2 H18 M7 5 H18 M9 8 H18 M9 11 H18 M7 14 H18 M7 17 H18" stroke="#3A3A3A" stroke-width="1.2"/></svg>
<svg class="a" style="left:1423px;top:678px" width="21" height="20" viewBox="0 0 21 20"><rect x="1" y="1" width="8" height="8" fill="#3A3A3A"/><path d="M2.5 8 L5 2.5 L7.5 8 M3.5 6 H6.5" fill="none" stroke="#D6D8EA" stroke-width="1.1"/><path d="M1.5 11.5 H8.5 L1.5 18.5 H8.5" fill="none" stroke="#3A3A3A" stroke-width="1.8"/><path d="M15 3 V17 M11 13 L15 17.5 L19 13" fill="none" stroke="#1E68B4" stroke-width="2.2"/></svg>
<div class="sep" style="left:1452px;top:677px;height:24px;background:#A7B3D6"></div>
<svg class="a" style="left:1459px;top:678px" width="20" height="20" viewBox="0 0 20 20"><path d="M2 17.5 L10 9.5" stroke="#A9B0C6" stroke-width="3.4" stroke-linecap="round"/><path d="M9 10 C7 6 10 1.5 14.5 2.5 L11.5 5.5 L14.5 8.5 L17.5 5.5 C18.5 10 14 13 10 11Z" fill="#A9B0C6"/></svg>
<div class="a" style="left:1387px;top:704px;width:493px;height:288px;background:#F6F8FC"></div>
<div class="a" style="left:1387px;top:913px;width:493px;height:1px;background:#E2E4EA"></div>

<!-- ===== right strip ===== -->
<div class="t" style="left:1905px;top:89px;transform-origin:0 0;transform:rotate(90deg);color:#fff">通知</div>
<div class="a" style="left:1912px;top:89px;width:8px;height:29px;background:#40568D"></div>
<!-- IME -->
<div class="a" style="left:1844px;top:931px;width:73px;height:32px;background:#fff;border-radius:6px;box-shadow:0 0 1.5px 1px rgba(0,0,0,.28)"></div>
<div class="t" style="left:1848px;top:937px;font-size:20.5px;color:#333;transform-origin:0 0;transform:scaleX(0.84);-webkit-text-stroke:0.4px #333">En</div>
<svg class="a" style="left:1872px;top:937px" width="18" height="20" viewBox="0 0 18 20"><path d="M10 1.5 A8 8 0 1 1 1.5 10 A9 9 0 0 0 10 1.5 Z" fill="none" stroke="#3A3A3A" stroke-width="1.4"/></svg>
<div class="a" style="left:1900px;top:943px;width:6.5px;height:6.5px;border-radius:50%;background:#333"></div>

<!-- ===== status bar ===== -->
<div class="a" style="left:0;top:1000px;width:1920px;height:30px;background:#40508C"></div>
<svg class="a" style="left:4px;top:1007px" width="21" height="17" viewBox="0 0 21 17"><path d="M5 1 H20 L16 16 H1 Z" fill="none" stroke="#fff" stroke-width="1.4"/></svg>
<div class="t" style="left:35px;top:1008px;color:#fff">就绪</div>
<svg class="a" style="left:1685px;top:1007px" width="13" height="17" viewBox="0 0 13 17"><path d="M6.5 16.5 V3 M1.2 7.5 L6.5 2 L11.8 7.5" fill="none" stroke="#D5D9E6" stroke-width="2.6"/></svg>
<div class="t" style="left:1709px;top:1008px;color:#fff">添加到源代码管理</div>
<svg class="a" style="left:1837px;top:1011px" width="11" height="7" viewBox="0 0 11 7"><path d="M0.5 6.5 L5.5 1 L10.5 6.5Z" fill="#fff"/></svg>
<svg class="a" style="left:1871px;top:1006px" width="18" height="19" viewBox="0 0 18 19"><path d="M9 1 C5 1 3.5 4 3.5 7 V12 L1.5 14.5 H16.5 L14.5 12 V7 C14.5 4 13 1 9 1Z" fill="#D6D9E3"/><path d="M7 16 C7 18 11 18 11 16Z" fill="#D6D9E3"/></svg>
<div class="a" style="left:1883px;top:1010px;width:16px;height:16px;border-radius:50%;background:#E51400"></div>
<div class="t" style="left:1887px;top:1011.5px;color:#fff;font-size:13.5px">4</div>
<!-- bottom strip -->
<div class="a" style="left:0;top:1030px;width:1920px;height:9px;background:#DCDDE0"></div>
<div class="a" style="left:432px;top:1030px;width:56px;height:9px;background:#EFEFEF"></div>
<div class="a" style="left:488px;top:1030px;width:1px;height:9px;background:#B5B5B5"></div>
<div class="a" style="left:1916px;top:1030px;width:1px;height:9px;background:#B5B5B5"></div>
<div class="t" style="left:1788px;top:1036px;font-size:14px;color:#000">18:00</div>

</body></html>
